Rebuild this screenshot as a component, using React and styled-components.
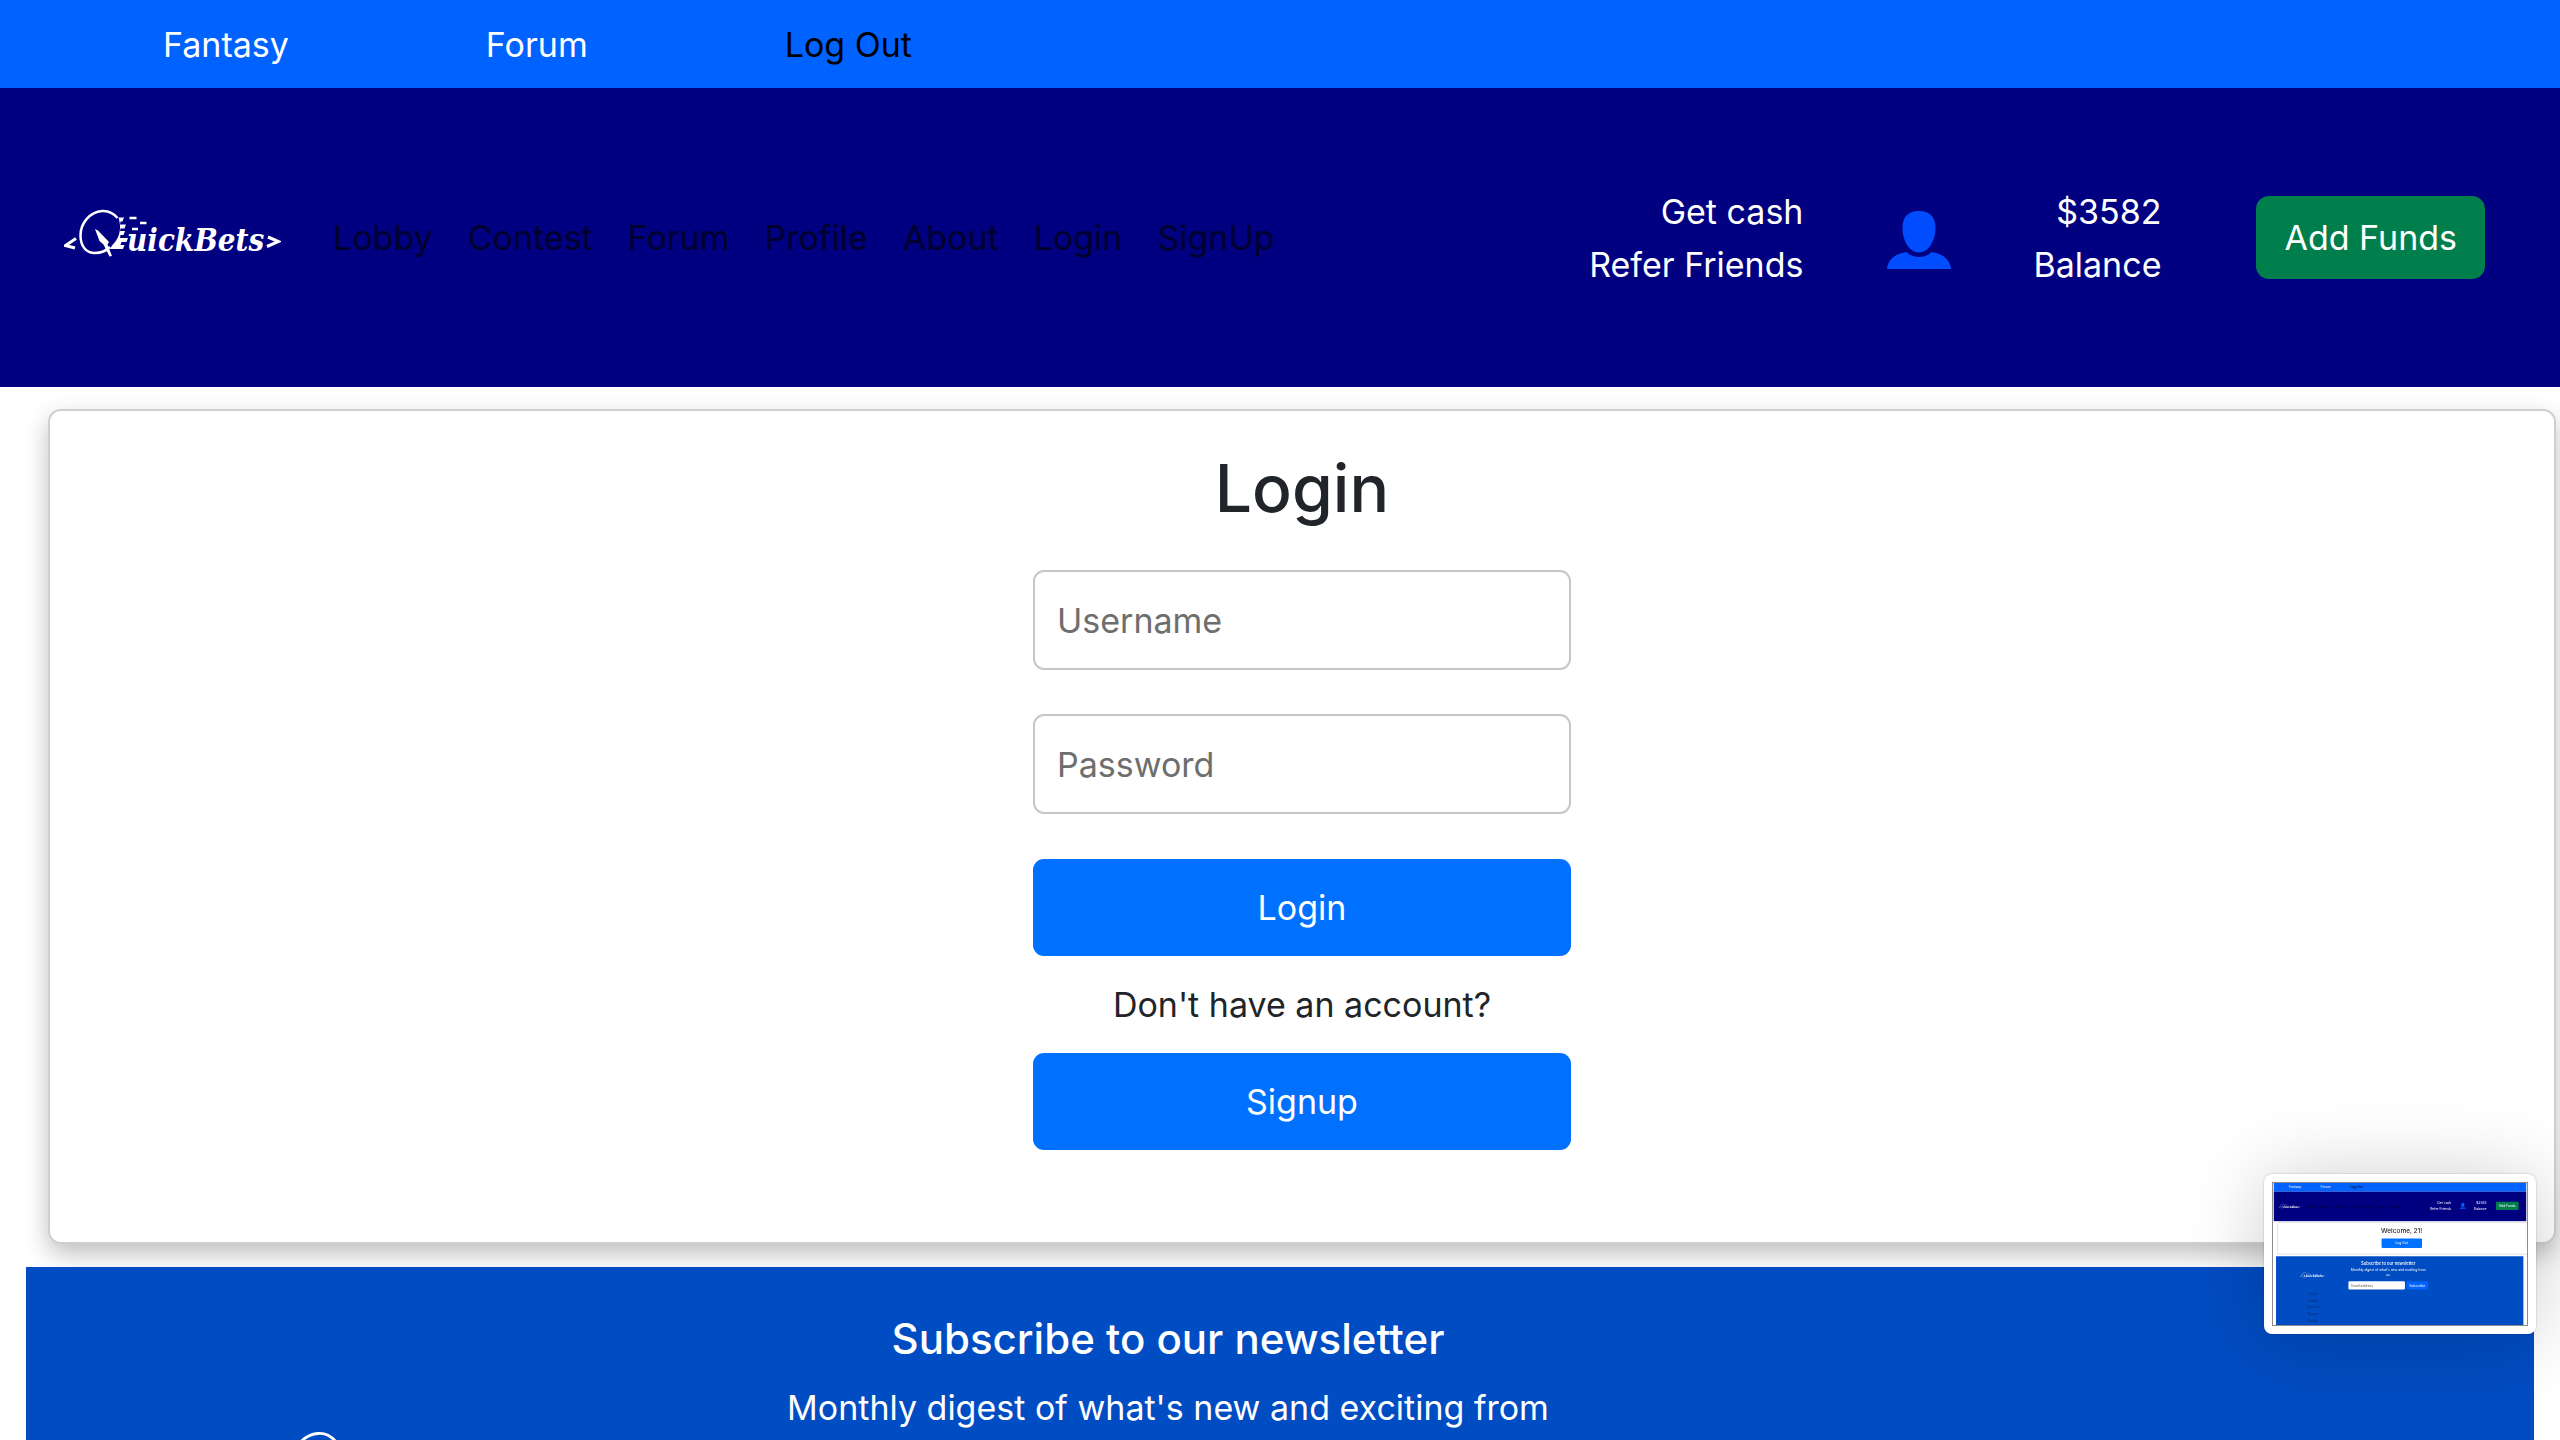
import React from "react";
import styled, { createGlobalStyle } from "styled-components";

const Global = createGlobalStyle`
  *, *::before, *::after { box-sizing: border-box; }
  body {
    margin: 0;
    background: #fff;
    color: #212529;
    font-family: Inter, Roboto, "Liberation Sans", sans-serif;
    font-size: 34px;
    line-height: 53px;
  }
  h1, h2, p { margin: 0; }
  a { text-decoration: none; }
  button, input { font: inherit; margin: 0; }
`;

const Page = styled.div`
  display: flex;
  flex-direction: column;
  height: 100vh;
  overflow: hidden;
`;

const TopBar = styled.nav`
  display: flex;
  flex: none;
  align-items: center;
  gap: 197px;
  min-height: 88px;
  padding-left: 163px;
  background: #0062ff;
`;

const TopLink = styled.a`
  color: ${(p) => (p.$dark ? "#000" : "#fff")};
`;

const Header = styled.header`
  display: flex;
  flex: none;
  align-items: center;
  min-height: 299px;
  padding: 0 75px 0 64px;
  background: #000080;
`;

const MainNav = styled.nav`
  display: flex;
  gap: 35px;
  margin-left: 52px;
`;

const NavLink = styled.a`
  color: #00002e;
`;

const Account = styled.div`
  display: flex;
  align-items: center;
  margin-left: auto;
`;

const Stack = styled.div`
  display: flex;
  flex-direction: column;
  text-align: right;
  color: #fff;
`;

const StackLink = styled.a`
  color: #fff;
`;

const UserIcon = styled.svg`
  display: block;
  width: 64px;
  height: 58px;
  margin: 4px 82px 0 84px;
  fill: #004dff;
`;

const FundsButton = styled.button`
  height: 83px;
  margin-left: 95px;
  padding: 0 28px;
  border: 0;
  border-radius: 13px;
  background: #007f4c;
  color: #fff;
`;

const Card = styled.main`
  display: flex;
  flex: none;
  flex-direction: column;
  align-items: center;
  margin: 22px 4px 23px 48px;
  padding: 35px 24px 92px;
  border: 2px solid #cfcfcf;
  border-radius: 13px;
  background: #fff;
  box-shadow: 0 10px 24px rgba(0, 0, 0, 0.25);
`;

const Title = styled.h1`
  margin-bottom: 40px;
  font-size: 66px;
  font-weight: 500;
  line-height: 84px;
`;

const Form = styled.form`
  display: flex;
  flex-direction: column;
  width: 538px;
  max-width: 100%;
`;

const Fields = styled.div`
  display: flex;
  flex-direction: column;
  gap: 44px;
  margin-bottom: 45px;
`;

const Field = styled.input`
  width: 100%;
  height: 100px;
  padding: 0 22px;
  border: 2px solid #c6c6c6;
  border-radius: 11px;
  background: #fff;
  color: #212529;
  &::placeholder { color: #6e6e6e; opacity: 1; }
`;

const Action = styled.button`
  height: 97px;
  border: 0;
  border-radius: 11px;
  background: #0070ff;
  color: #fff;
`;

const Hint = styled.p`
  padding: 22px 0;
  text-align: center;
`;

const Footer = styled.footer`
  display: grid;
  flex: 1;
  grid-template-columns: 746fr 792fr 970fr;
  min-height: 0;
  margin: 0 26px;
  overflow: hidden;
  background: #004cc2;
  color: #fff;
  z-index: 1;
`;

const FooterBrand = styled.div`
  padding-top: 163px;
  display: flex;
  justify-content: center;
`;

const Newsletter = styled.section`
  padding-top: 45px;
  text-align: center;
`;

const NewsTitle = styled.h2`
  margin-bottom: 16px;
  font-size: 42px;
  font-weight: 500;
  line-height: 53px;
`;

const LogoSvg = styled.svg`
  display: block;
  flex: none;
  width: ${(p) => (p.$large ? 250 : 217)}px;
  height: ${(p) => (p.$large ? 68 : 59)}px;
`;

const Preview = styled.aside`
  position: fixed;
  right: 24px;
  bottom: 106px;
  z-index: 2;
  padding: 8px;
  border-radius: 8px;
  background: #fff;
  box-shadow: 0 0 2px rgba(0, 0, 0, 0.3), 0 4px 80px rgba(0, 0, 0, 0.2);
`;

const Shot = styled.svg`
  display: block;
  width: 256px;
  height: 144px;
  border: 1px solid #8c8c8c;
`;

function LogoArt() {
  return (
    <g>
      <path d="M36 58.500L25.500 65.500L35 68" fill="none" stroke="#fff" strokeWidth="3" />
      <path
        d="M77.500 38C73 32.500 68 30.500 62 31C50 32 40.500 43 40.500 55.500C40.500 66 46 73 55 73C60.500 73 66 71 70 67"
        fill="none"
        stroke="#fff"
        strokeWidth="2.500"
      />
      <path
        d="M76 37.500h8l-1.500 4h-2l-.5 3h6l-1.500 4h-4l-.5 2.500h5l-1.500 4h-3l-.5 3h8l-1.500 4h-5l-1 3h4l-1.500 4h-13l2-3.500c5-5 7.500-10 8-17c.3-4-.5-7-1.500-11z"
        fill="#fff"
      />
      <path d="M55 49l3 1.500l11 11.500l-1.500 2.500l4.500 11.500l-2.500 0.500l-6-12l-4-3.500z" fill="#fff" />
      <path d="M89.500 38h7M100 43h6.500M92 49h6" fill="none" stroke="#fff" strokeWidth="2.600" />
      <text
        x="87"
        y="71"
        fill="#fff"
        fontFamily="'DejaVu Serif Condensed', 'DejaVu Serif', serif"
        fontSize="31"
        fontWeight="700"
        fontStyle="italic"
      >
        uickBets
      </text>
      <path d="M228 57L238.500 61.500L227 66.500" fill="none" stroke="#fff" strokeWidth="3" />
    </g>
  );
}

function Logo({ large }) {
  return (
    <LogoSvg $large={large} viewBox="24 28 217 59" role="img" aria-label="QuickBets">
      <LogoArt />
    </LogoSvg>
  );
}

const PERSON =
  "M32 0C22 0 15.500 5 15.500 17C15.500 29 22 41.500 32 41.500C42 41.500 48.500 29 48.500 17C48.500 5 42 0 32 0ZM19.500 41C8 43 1 48 0 58H64C63 48 56 43 44.500 41C41 44.500 37 46 32 46C27 46 23 44.500 19.500 41Z";

const NAV = ["Lobby", "Contest", "Forum", "Profile", "About", "Login", "SignUp"];
const NAV_X = [333, 467, 628, 765, 901, 1032, 1155];
const FOOTER_LINKS = ["Home", "Lobby", "Contest", "Forum", "Profile"];

function SessionPreview() {
  return (
    <Preview>
      <Shot viewBox="0 0 2560 1440" fontSize="34" role="img" aria-label="Preview">
        <rect width="2560" height="1440" fill="#fff" />
        <rect width="2560" height="88" fill="#0062ff" />
        <text x="153" y="54" fill="#fff">Fantasy</text>
        <text x="475" y="54" fill="#fff">Forum</text>
        <text x="776" y="54" fill="#000">Log Out</text>
        <rect y="88" width="2560" height="299" fill="#000080" />
        <svg x="54" y="208" width="217" height="59" viewBox="24 28 217 59"><LogoArt /></svg>
        {NAV.map((n, i) => (
          <text key={n} x={NAV_X[i]} y="250" fill="#00002e">{n}</text>
        ))}
        <g fill="#fff" textAnchor="end">
          <text x="1800" y="218">Get cash</text>
          <text x="1800" y="271">Refer Friends</text>
          <text x="2158" y="218">$3582</text>
          <text x="2158" y="271">Balance</text>
        </g>
        <path d={PERSON} transform="translate(1885 204)" fill="#0062ff" />
        <rect x="2253" y="190" width="230" height="83" rx="13" fill="#007f4c" />
        <text x="2368" y="243" fill="#fff" textAnchor="middle">Add Funds</text>
        <rect x="38" y="402" width="2540" height="320" rx="13" fill="#fff" stroke="#ccc" strokeWidth="6" />
        <g textAnchor="middle" fill="#fff">
          <text x="1297" y="508" fill="#212529" fontSize="66" fontWeight="500">Welcome, 21!</text>
          <rect x="1093" y="563" width="410" height="97" rx="11" fill="#0070ff" />
          <text x="1297" y="623">Log Out</text>
          <rect x="23" y="743" width="2508" height="697" fill="#004cc2" />
          <text x="1160" y="828" fontSize="42" fontWeight="500">Subscribe to our newsletter</text>
          <text x="1160" y="893">Monthly digest of what's new and exciting from</text>
          <text x="1160" y="948">us.</text>
          <rect x="757" y="997" width="573" height="84" rx="11" fill="#fff" />
          <text x="785" y="1051" fill="#555" textAnchor="start">Email address</text>
          <rect x="1343" y="997" width="222" height="84" rx="11" fill="#0062ff" />
          <text x="1454" y="1051">Subscribe</text>
          {FOOTER_LINKS.map((n, i) => (
            <text key={n} x="397" y={1132 + i * 70} fill="#002b70">{n}</text>
          ))}
        </g>
        <svg x="267" y="903" width="250" height="68" viewBox="24 28 217 59"><LogoArt /></svg>
      </Shot>
    </Preview>
  );
}

export default function App() {
  return (
    <Page>
      <Global />
      <TopBar aria-label="Sections">
        <TopLink href="#fantasy">Fantasy</TopLink>
        <TopLink href="#forum">Forum</TopLink>
        <TopLink href="#logout" $dark>Log Out</TopLink>
      </TopBar>
      <Header>
        <Logo />
        <MainNav aria-label="Main">
          {NAV.map((n) => (
            <NavLink key={n} href={`#${n.toLowerCase()}`}>{n}</NavLink>
          ))}
        </MainNav>
        <Account>
          <Stack>
            <StackLink href="#cash">Get cash</StackLink>
            <StackLink href="#refer">Refer Friends</StackLink>
          </Stack>
          <UserIcon viewBox="0 0 64 58" aria-hidden="true">
            <path d={PERSON} />
          </UserIcon>
          <Stack>
            <span>$3582</span>
            <span>Balance</span>
          </Stack>
          <FundsButton type="button">Add Funds</FundsButton>
        </Account>
      </Header>
      <Card>
        <Title>Login</Title>
        <Form onSubmit={(e) => e.preventDefault()}>
          <Fields>
            <Field type="text" placeholder="Username" aria-label="Username" />
            <Field type="password" placeholder="Password" aria-label="Password" />
          </Fields>
          <Action type="submit">Login</Action>
          <Hint>Don't have an account?</Hint>
          <Action type="button">Signup</Action>
        </Form>
      </Card>
      <Footer>
        <FooterBrand>
          <Logo large />
        </FooterBrand>
        <Newsletter>
          <NewsTitle>Subscribe to our newsletter</NewsTitle>
          <p>Monthly digest of what's new and exciting from</p>
        </Newsletter>
      </Footer>
      <SessionPreview />
    </Page>
  );
}
